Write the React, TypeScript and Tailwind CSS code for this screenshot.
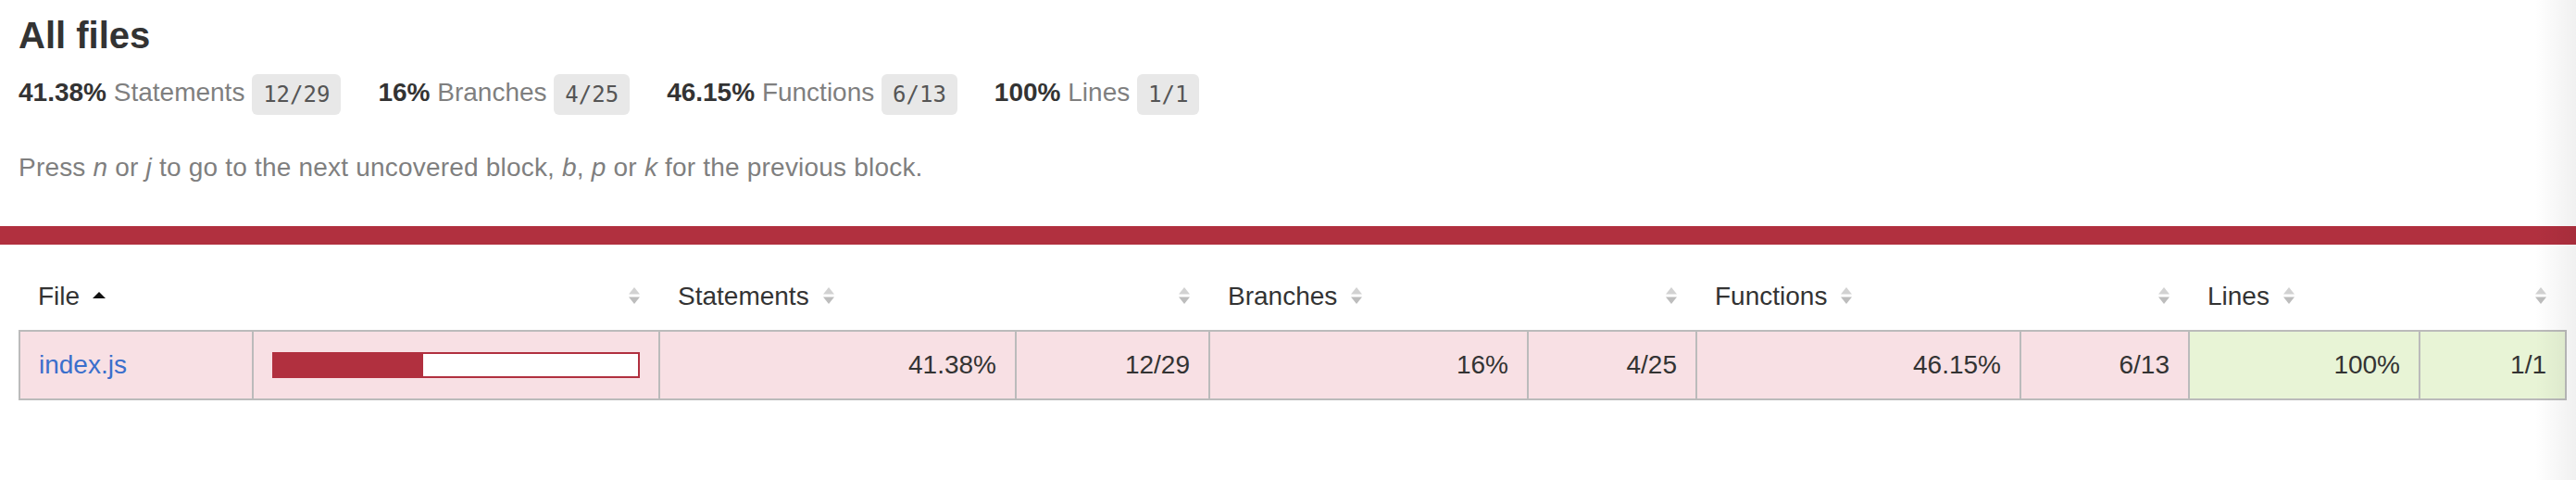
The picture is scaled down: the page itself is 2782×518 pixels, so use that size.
import React from 'react';

type Metric = { label: string; pct: string; frac: string };

const metrics: Metric[] = [
	{ label: 'Statements', pct: '41.38%', frac: '12/29' },
	{ label: 'Branches', pct: '16%', frac: '4/25' },
	{ label: 'Functions', pct: '46.15%', frac: '6/13' },
	{ label: 'Lines', pct: '100%', frac: '1/1' },
];

function Sorter() {
	return (
		<svg width="14" height="20" viewBox="0 0 14 20" className="ml-[14px] inline-block align-baseline">
			<path d="M7 1 L13 8.5 H1 Z" fill="#d2d2d2" />
			<path d="M1 11.5 H13 L7 19 Z" fill="#bdbdbd" />
		</svg>
	);
}

function SortedUp() {
	return (
		<svg width="14" height="20" viewBox="0 0 14 20" className="ml-[14px] inline-block align-baseline">
			<path d="M7 6 L14 13 H0 Z" fill="#111" />
		</svg>
	);
}

function Fraction(props: { children: React.ReactNode }) {
	return (
		<span className="rounded-[6px] bg-[#e8e8e8] px-[12px] py-[8px] align-middle font-['DejaVu_Sans_Mono',monospace] text-[24px] leading-[24px] text-[#555]">
			{props.children}
		</span>
	);
}

export default function App() {
	const pctCell = 'border-r-2 border-[#bbb] p-5 text-right';
	return (
		<div className="relative min-h-[518px] bg-white font-['Liberation_Sans',Arial,sans-serif] text-[28px] text-[#333]">
			<div className="px-5 pt-[15px]">
				<h1 className="text-[40px] font-bold leading-[46px]">All files</h1>
				<div className="flex pt-[22px] pb-5">
					{metrics.map((m) => (
						<div key={m.label} className="whitespace-nowrap pr-10 leading-[34px]">
							<span className="font-bold">{m.pct} </span>
							<span className="text-[#7f7f7f]">{m.label}</span> <Fraction>{m.frac}</Fraction>
						</div>
					))}
				</div>
				<p className="mt-[27px] mb-[46px] leading-[34px] tracking-[0.2px] text-[#7f7f7f]">
					Press <em>n</em> or <em>j</em> to go to the next uncovered block, <em>b</em>, <em>p</em> or{' '}
					<em>k</em> for the previous block.
				</p>
			</div>

			<div className="h-5 bg-[#b1303f]" />

			<div className="pl-5 pt-5">
				<table className="w-[2750px] table-fixed border-collapse leading-8">
					<colgroup>
						<col className="w-[252px]" />
						<col className="w-[439px]" />
						<col className="w-[385px]" />
						<col className="w-[209px]" />
						<col className="w-[344px]" />
						<col className="w-[182px]" />
						<col className="w-[350px]" />
						<col className="w-[182px]" />
						<col className="w-[249px]" />
						<col className="w-[158px]" />
					</colgroup>
					<thead>
						<tr className="border-b-2 border-[#bbb]">
							<th className="whitespace-nowrap p-5 text-left font-normal">
								File
								<SortedUp />
							</th>
							<th className="p-5 text-right font-normal">
								<Sorter />
							</th>
							{metrics.map((m) => (
								<React.Fragment key={m.label}>
									<th className="whitespace-nowrap p-5 text-left font-normal">
										{m.label}
										<Sorter />
									</th>
									<th className="p-5 text-right font-normal">
										<Sorter />
									</th>
								</React.Fragment>
							))}
						</tr>
					</thead>
					<tbody className="border-2 border-[#bbb]">
						<tr>
							<td className="whitespace-nowrap border-r-2 border-[#bbb] bg-[#f8e0e4] p-5">
								<a href="#" className="text-[#3b6fcc]">
									index.js
								</a>
							</td>
							<td className="border-r-2 border-[#bbb] bg-[#f8e0e4] p-5">
								<div className="flex h-[28px] border-2 border-[#b1303f] bg-white">
									<div className="h-full bg-[#b1303f]" style={{ width: '41%' }} />
								</div>
							</td>
							<td className={`${pctCell} bg-[#f8e0e4]`}>41.38%</td>
							<td className={`${pctCell} bg-[#f8e0e4]`}>12/29</td>
							<td className={`${pctCell} bg-[#f8e0e4]`}>16%</td>
							<td className={`${pctCell} bg-[#f8e0e4]`}>4/25</td>
							<td className={`${pctCell} bg-[#f8e0e4]`}>46.15%</td>
							<td className={`${pctCell} bg-[#f8e0e4]`}>6/13</td>
							<td className={`${pctCell} bg-[#e8f4d6]`}>100%</td>
							<td className="bg-[#e8f4d6] p-5 text-right">1/1</td>
						</tr>
					</tbody>
				</table>
			</div>

			<div className="pointer-events-none absolute right-0 top-0 h-full w-[44px] bg-linear-to-r from-transparent to-[#0000000f]" />
		</div>
	);
}
